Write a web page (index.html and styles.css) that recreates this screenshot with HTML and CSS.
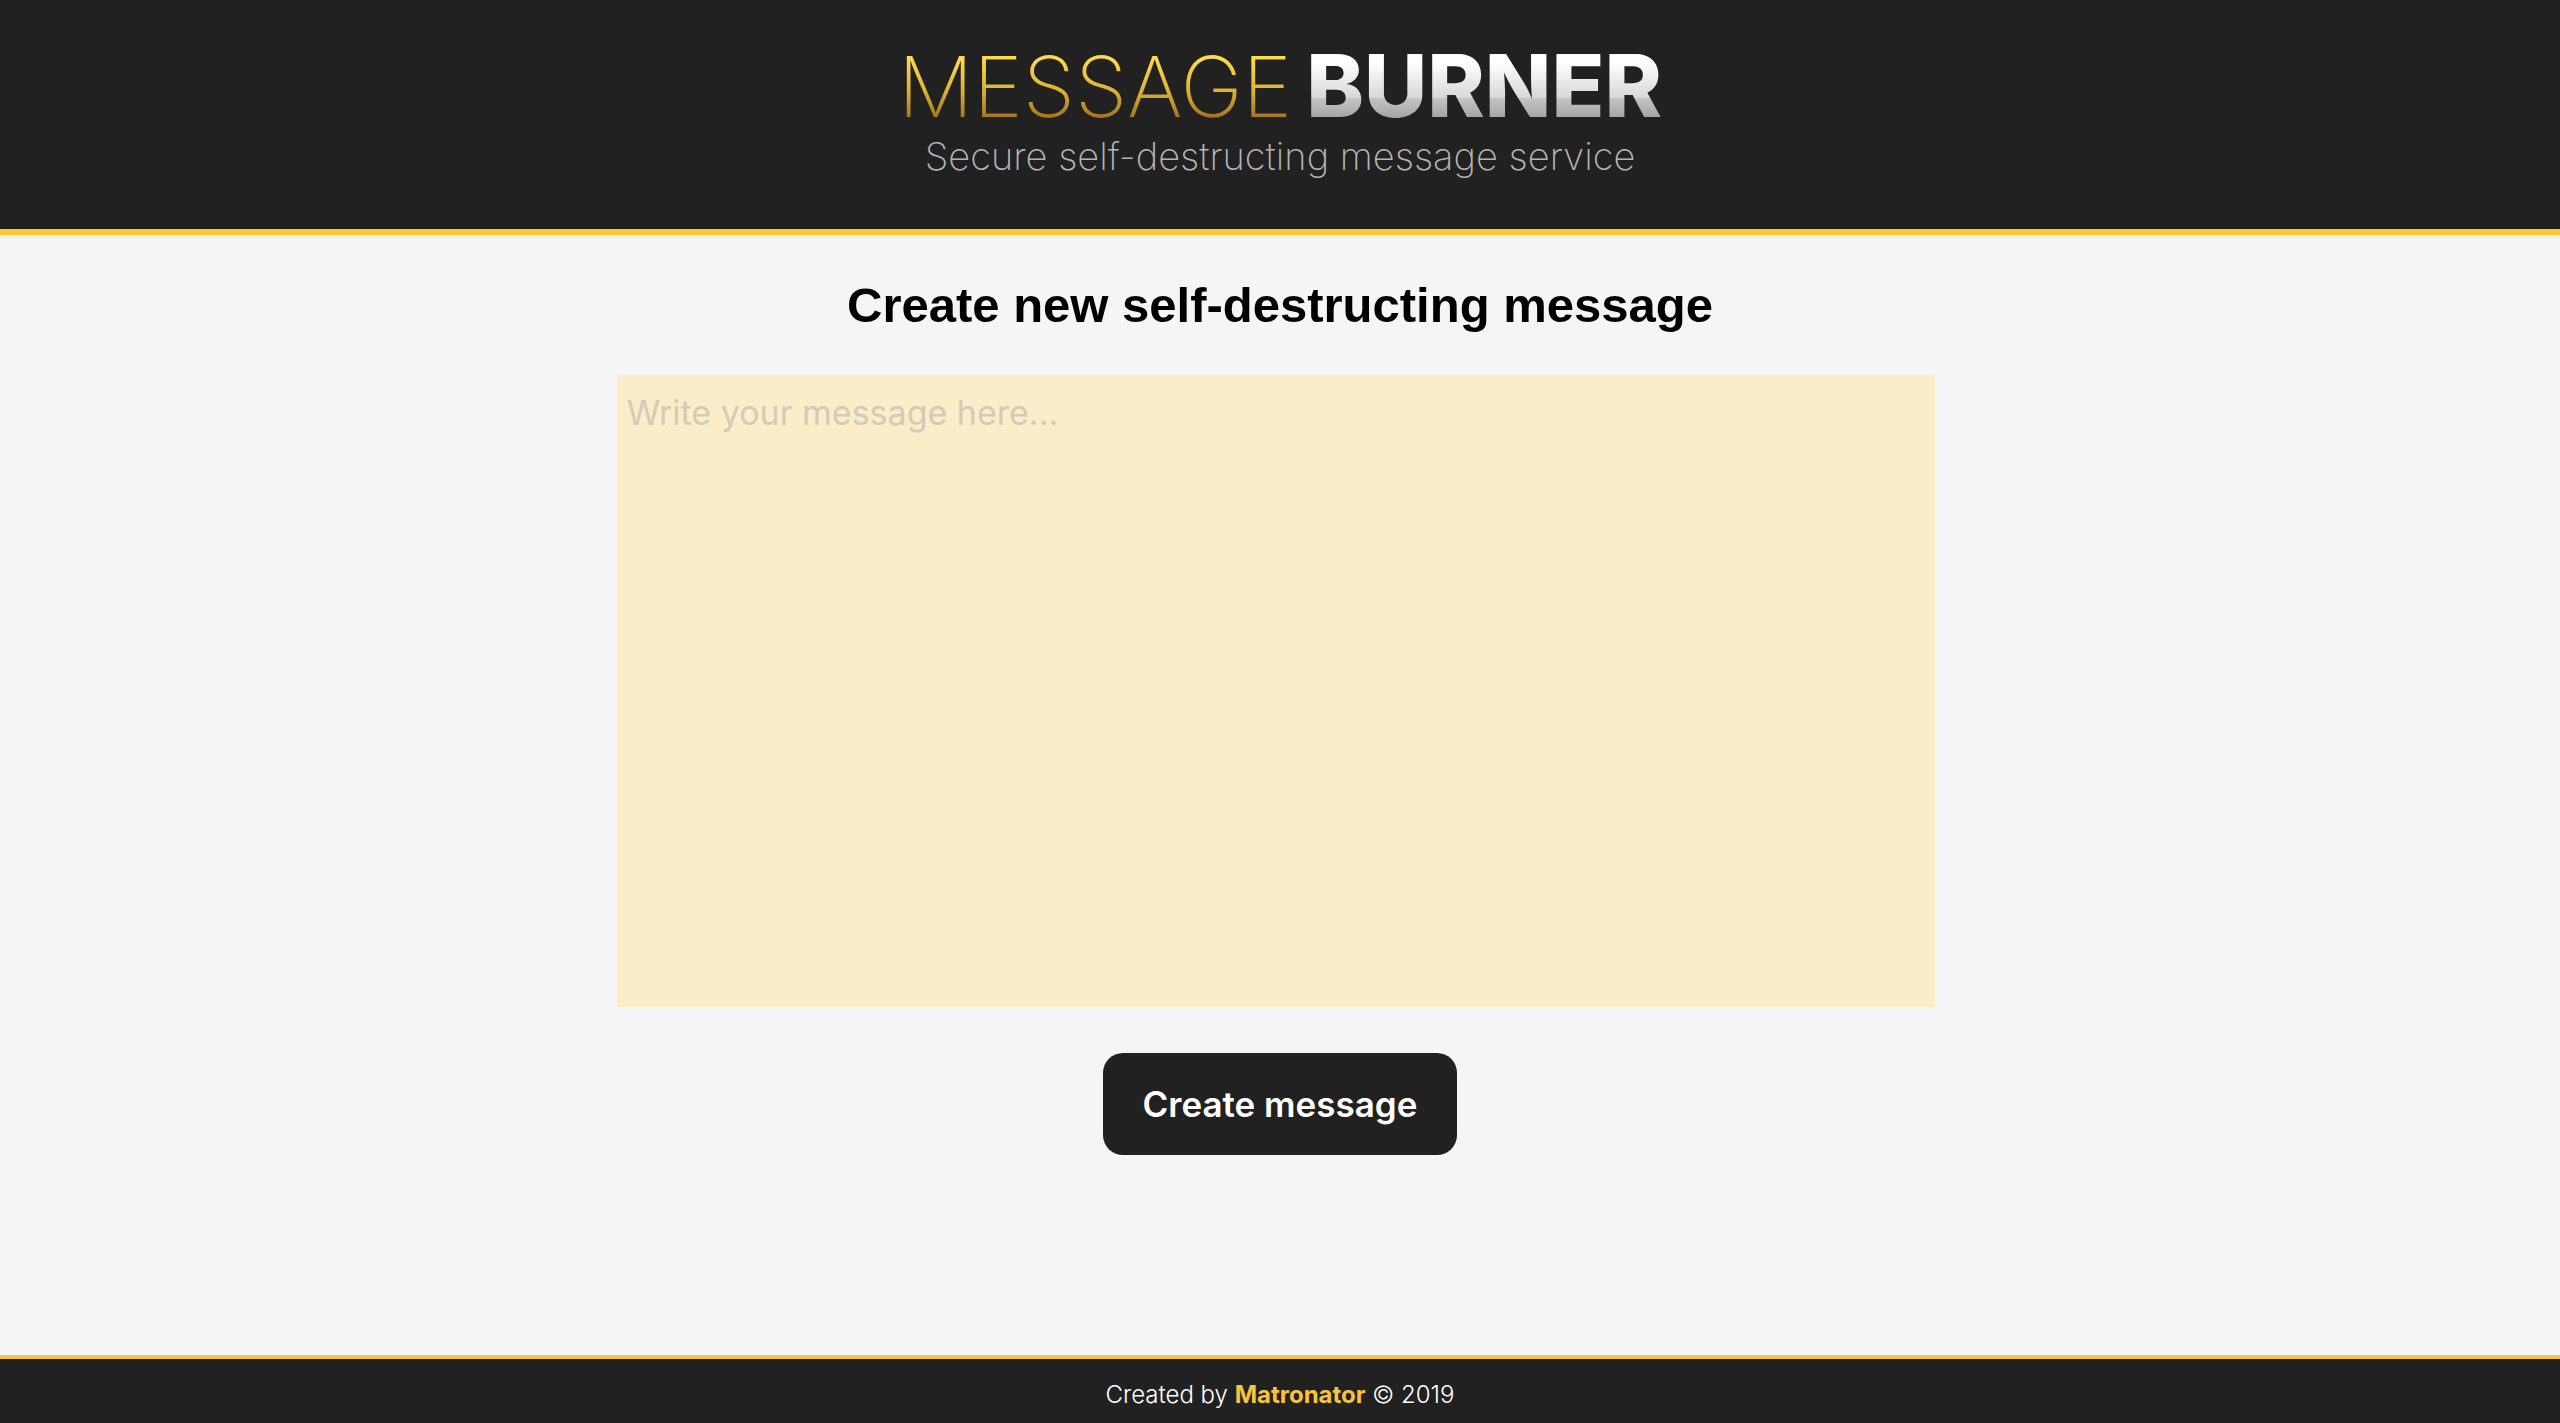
FILE: index.html
```html
<!DOCTYPE html>
<html lang="en">
<head>
<meta charset="utf-8">
<meta name="viewport" content="width=device-width, initial-scale=1">
<title>Message Burner</title>
<link rel="stylesheet" href="styles.css">
</head>
<body>
<header class="site-header">
  <h1 class="logo"><span class="logo-message">MESSAGE</span><span class="logo-burner">BURNER</span></h1>
  <p class="tagline">Secure self-destructing message service</p>
</header>
<main class="content">
  <form class="message-form">
    <h2 class="form-title"><label for="message">Create new self-destructing message</label></h2>
    <textarea class="message-input" id="message" name="message" placeholder="Write your message here..."></textarea>
    <button class="submit-button" type="submit">Create message</button>
  </form>
</main>
<footer class="site-footer">
  <p class="credit">Created by <a class="credit-link" href="#">Matronator</a> © 2019</p>
</footer>
</body>
</html>
```

FILE: styles.css
```css
* {
  box-sizing: border-box;
}

body {
  display: flex;
  flex-direction: column;
  min-height: 100vh;
  margin: 0;
  background: #f5f5f5;
  color: #000;
  font-family: Inter, "Liberation Sans", sans-serif;
}

.site-header {
  padding: 38px 16px 52px;
  border-bottom: 6px solid #ffc832;
  background: #212121;
  text-align: center;
}

.logo {
  display: flex;
  justify-content: center;
  align-items: baseline;
  gap: 14px;
  margin: 0;
  font-size: 84px;
  line-height: 96px;
}

.logo-message,
.logo-burner {
  background-clip: text;
  -webkit-background-clip: text;
  color: transparent;
}

.logo-message {
  background-image: linear-gradient(#ffdb4a 20%, #d9b22f 55%, #a87820 80%);
  font-weight: 250;
}

.logo-burner {
  background-image: linear-gradient(#fff 25%, #d8d8d8 62%, #c4c4c4 63%, #a6a6a6 82%);
  font-size: 87px;
  font-weight: 800;
}

.tagline {
  margin: 0;
  color: #b4b4b4;
  font-size: 38px;
  font-weight: 200;
  line-height: 42px;
}

.content {
  flex: 1;
  padding: 40px 12px;
}

.message-form {
  display: flex;
  flex-direction: column;
  align-items: center;
}

.form-title {
  margin: 0 0 40px;
  font-family: "Liberation Sans", Arial, sans-serif;
  font-size: 49px;
  line-height: 60px;
}

.message-input {
  width: 52%;
  height: 632px;
  margin: 0 8px 46px 0;
  padding: 16px 10px;
  border: 0;
  background: #faedc8;
  color: #212121;
  font-family: inherit;
  font-size: 34px;
  line-height: 44px;
  resize: none;
}

.message-input::placeholder {
  color: #d2cbb8;
  opacity: 1;
}

.submit-button {
  padding: 29px 40px;
  border: 0;
  border-radius: 20px;
  background: #212121;
  color: #fff;
  font-family: inherit;
  font-size: 35px;
  font-weight: 600;
  line-height: 44px;
}

.site-footer {
  padding: 20px 16px 12px;
  border-top: 4px solid #f8c53a;
  background: #212121;
  color: #fff;
  text-align: center;
}

.credit {
  margin: 0;
  font-size: 24px;
  font-weight: 300;
  line-height: 32px;
}

.credit-link {
  color: #f8c53a;
  font-weight: 700;
  text-decoration: none;
}
```
